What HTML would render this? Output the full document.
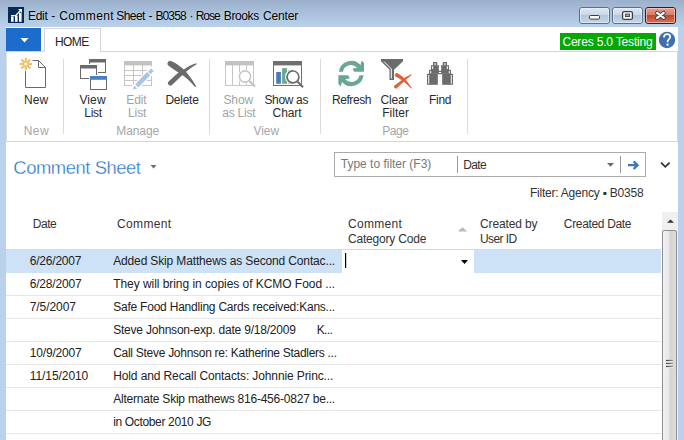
<!DOCTYPE html>
<html><head><meta charset="utf-8">
<style>
*{margin:0;padding:0;box-sizing:border-box}
html,body{width:684px;height:440px;overflow:hidden}
body{position:relative;background:#b9d1ea;font-family:"Liberation Sans",sans-serif;font-size:11.5px;color:#1e1e1e}
.a{position:absolute}
.t{position:absolute;white-space:pre}
svg{position:absolute;overflow:visible}
#title{left:0;top:0;width:684px;height:27px;background:linear-gradient(#9cb0cb,#b9d1eb)}
#client{left:6px;top:27px;width:672px;height:413px;background:#fff}
#appbtn{left:6px;top:28px;width:35px;height:23px;background:#1c6ccb}
#ribbon{left:6px;top:51px;width:672px;height:91px;border:1px solid #d6d6d6;border-left-color:#dedede;background:#fff}
#tab{left:44px;top:28px;width:57px;height:24px;background:#fff;border:1px solid #d4d4d4;border-bottom:none}
.sep{position:absolute;width:1px;background:#dcdcdc}
#badge{left:560px;top:33px;width:96px;height:17px;background:#06a806}
#filter{left:334px;top:152px;width:312px;height:25px;border:1px solid #ababab;background:#fff}
#sel{left:6px;top:250px;width:655px;height:23px;background:#cde1f7}
#edit{left:342px;top:250px;width:132px;height:23px;background:#fff}
.rl{position:absolute;left:6px;width:655px;height:1px;background:#e6e6e6}
#hl{left:6px;top:249px;width:655px;height:1px;background:#dcd8d8}
#sb{left:662px;top:212px;width:16px;height:228px;background:#f0f0f0}
#thumb{left:662px;top:230px;width:15px;height:220px;border:1px solid #8e8e8e;border-radius:2px;background:linear-gradient(90deg,#f2f2f2,#e8e8e8 45%,#d4d4d4 55%,#dcdcdc)}
</style></head><body>
<div id="title" class="a"></div>
<div id="client" class="a"></div>

<!-- title icon -->
<svg style="left:0;top:0" width="684" height="30" viewBox="0 0 684 30">
  <rect x="8" y="7" width="16" height="16" fill="#062a5a"/>
  <rect x="11" y="16.5" width="2.6" height="5.3" fill="#fff"/>
  <rect x="15" y="15.5" width="2.6" height="6.3" fill="#fff"/>
  <rect x="19" y="12.8" width="2.6" height="9" fill="#fff"/>
  <polyline points="11,15.7 15.5,15.7 21,10" fill="none" stroke="#fff" stroke-width="1.3"/>
  <polygon points="18,9 22,9 22,13" fill="#fff"/>
  <!-- window buttons -->
  <defs>
    <linearGradient id="wb" x1="0" y1="0" x2="0" y2="1">
      <stop offset="0" stop-color="#dfe8f3"/><stop offset="0.5" stop-color="#c9d7e8"/><stop offset="0.5" stop-color="#b3c6dd"/><stop offset="1" stop-color="#c6d6ea"/>
    </linearGradient>
    <linearGradient id="cb" x1="0" y1="0" x2="0" y2="1">
      <stop offset="0" stop-color="#e8a18f"/><stop offset="0.5" stop-color="#d47a63"/><stop offset="0.5" stop-color="#c2482b"/><stop offset="1" stop-color="#d4775c"/>
    </linearGradient>
  </defs>
  <rect x="579.5" y="7.5" width="30" height="16" rx="2.5" fill="url(#wb)" stroke="#5d6f88"/><rect x="580.5" y="8.5" width="28" height="14" rx="1.5" fill="none" stroke="#eef3fa" stroke-opacity="0.6"/>
  <rect x="612.5" y="7.5" width="30" height="16" rx="2.5" fill="url(#wb)" stroke="#5d6f88"/><rect x="613.5" y="8.5" width="28" height="14" rx="1.5" fill="none" stroke="#eef3fa" stroke-opacity="0.6"/>
  <rect x="645.5" y="7.5" width="30" height="16" rx="2.5" fill="url(#cb)" stroke="#4a1612"/><rect x="646.5" y="8.5" width="28" height="14" rx="1.5" fill="none" stroke="#f6d0c4" stroke-opacity="0.7"/>
  <rect x="589.5" y="15.5" width="10" height="3.6" rx="1" fill="#fff" stroke="#3d3d3d" stroke-width="1"/>
  <rect x="622.6" y="11.6" width="9.8" height="7.8" rx="1.5" fill="#fff" stroke="#3d3d3d" stroke-width="1.3"/>
  <rect x="625.4" y="14.1" width="4.2" height="2.4" fill="#9bb0c6" stroke="#3d3d3d" stroke-width="0.9"/>
  <path d="M657.1,12.9 L663.7,17.9 M663.7,12.9 L657.1,17.9" stroke="#3a4249" stroke-width="4" stroke-linecap="round"/>
  <path d="M657.1,12.9 L663.7,17.9 M663.7,12.9 L657.1,17.9" stroke="#fff" stroke-width="2.3" stroke-linecap="round"/>
</svg>

<div id="appbtn" class="a"></div>
<svg style="left:0;top:0" width="60" height="60" viewBox="0 0 60 60"><polygon points="20.5,38 28.5,38 24.5,42.5" fill="#fff"/></svg>
<div id="badge" class="a"></div>
<svg style="left:0;top:0" width="684" height="60" viewBox="0 0 684 60">
  <circle cx="667" cy="40" r="8.2" fill="#3f6fae"/>
  <path d="M664,37.4 C664,35.3 665.4,34.2 667.1,34.2 C668.9,34.2 670.2,35.3 670.2,37 C670.2,38.9 667.6,39.4 667.6,41.6 L667.6,42.2" fill="none" stroke="#fff" stroke-width="1.7"/>
  <rect x="666.6" y="43.6" width="2" height="2" fill="#fff"/>
</svg>

<div id="ribbon" class="a"></div>
<div id="tab" class="a"></div>
<div class="sep" style="left:63px;top:59px;height:75px"></div>
<div class="sep" style="left:209px;top:59px;height:75px"></div>
<div class="sep" style="left:320px;top:59px;height:75px"></div>
<div class="sep" style="left:467px;top:59px;height:75px"></div>

<svg style="left:0;top:0" width="684" height="142" viewBox="0 0 684 142">
  <!-- New -->
  <path d="M25.5,71 L25.5,87.5 L45.5,87.5 L45.5,67.5 L38.5,60.5 L32.5,60.5" fill="none" stroke="#6a6a6a" stroke-width="1"/>
  <path d="M38.5,60.5 L38.5,67.5 L45.5,67.5" fill="none" stroke="#6a6a6a" stroke-width="1"/>
  <g stroke="#efbf66" stroke-width="2.1" stroke-linecap="butt">
    <line x1="25.8" y1="57.8" x2="25.8" y2="60.8"/><line x1="25.8" y1="67.2" x2="25.8" y2="70.2"/>
    <line x1="19.6" y1="64" x2="22.6" y2="64"/><line x1="29" y1="64" x2="32" y2="64"/>
    <line x1="21.4" y1="59.6" x2="23.5" y2="61.7"/><line x1="28.1" y1="66.3" x2="30.2" y2="68.4"/>
    <line x1="30.2" y1="59.6" x2="28.1" y2="61.7"/><line x1="23.5" y1="66.3" x2="21.4" y2="68.4"/>
  </g>
  <circle cx="25.8" cy="64" r="2.5" fill="none" stroke="#efbf66" stroke-width="1.8"/>

  <!-- View List -->
  <rect x="89.5" y="59.5" width="16" height="13" fill="#fff" stroke="#6a6a6a"/>
  <rect x="89" y="59" width="17" height="3.5" fill="#6a6a6a"/>
  <rect x="79" y="64" width="19" height="16" fill="#fff"/>
  <rect x="80.5" y="65.5" width="16" height="13" fill="#fff" stroke="#6a6a6a"/>
  <rect x="80" y="65" width="17" height="3.5" fill="#6a6a6a"/>
  <rect x="89" y="75" width="19" height="16" fill="#fff"/>
  <rect x="90.5" y="76.5" width="16" height="13" fill="#fff" stroke="#6a6a6a"/>
  <rect x="90" y="76" width="17" height="3.8" fill="#4a80c3"/>

  <!-- Edit List (disabled) -->
  <g fill="none" stroke="#c6c6c6" stroke-width="1">
    <rect x="124.5" y="61.5" width="27" height="24"/>
    <line x1="133.5" y1="65" x2="133.5" y2="85"/><line x1="142.5" y1="65" x2="142.5" y2="85"/>
    <line x1="124" y1="70.5" x2="152" y2="70.5"/><line x1="124" y1="75.5" x2="152" y2="75.5"/><line x1="124" y1="80.5" x2="152" y2="80.5"/>
  </g>
  <rect x="124" y="61" width="28" height="4.4" fill="#c2c2c2"/>
  <path d="M133,89.6 L152.4,69.8" stroke="#fff" stroke-width="7" stroke-linecap="round"/>
  <polygon points="133,89.6 134.05,85.45 137.15,88.55" fill="#a9c4e4"/>
  <polygon points="135.15,84.35 138.25,87.45 150.15,75.15 147.05,72.05" fill="#a9c4e4"/>
  <polygon points="148.03,71.63 150.57,74.17 153.67,71.07 151.13,68.53" fill="#a9c4e4"/>

  <!-- Delete -->
  <path d="M171.5,61.2 C176,63 180,66 183.5,69.2 C188,73.5 192.5,79.5 196.2,86.5 L195,87 C190.5,81.5 185,76.5 179.5,73.2 C175.5,70.5 171,68 169,66 A2.7,2.7 0 0 1 171.5,61.2 Z" fill="#6b6b6b"/>
  <path d="M196.3,63.2 C192,64.5 188.5,66.3 185,68.7 C182,71 180,72.2 178,73 C174,76.5 170.5,79.5 167.8,82.6 A2.6,2.6 0 0 0 172,85 C175.5,81.5 179,78 182.2,75.2 C186,71.8 190.5,67.8 196.6,64.3 Z" fill="#6b6b6b"/>

  <!-- Show as List (disabled) -->
  <g fill="none" stroke="#c6c6c6" stroke-width="1">
    <rect x="225.5" y="61.5" width="28" height="24"/>
    <line x1="232.5" y1="65" x2="232.5" y2="85"/><line x1="239.5" y1="65" x2="239.5" y2="85"/><line x1="246.5" y1="65" x2="246.5" y2="85"/>
  </g>
  <rect x="225" y="61" width="29" height="4.4" fill="#c2c2c2"/>
  <circle cx="245" cy="76.5" r="7.2" fill="#fff"/>
  <circle cx="245" cy="76.5" r="5.6" fill="#fff" stroke="#c6c6c6" stroke-width="1.6"/>
  <path d="M249.5,81 L255,86.5" stroke="#c6c6c6" stroke-width="2.2"/>

  <!-- Show as Chart -->
  <rect x="273.5" y="61.5" width="28" height="24" fill="none" stroke="#6f6f6f"/>
  <rect x="273" y="61" width="29" height="4.4" fill="#6f6f6f"/>
  <rect x="276.2" y="72" width="4.7" height="11.8" fill="#4a7cb8"/>
  <rect x="282.1" y="68.1" width="4.9" height="15.7" fill="#6aa88f"/>
  <rect x="288" y="70" width="5" height="13.8" fill="#6f6f6f"/>
  <circle cx="293" cy="76.9" r="7.4" fill="none" stroke="#fff" stroke-width="1.2"/>
  <circle cx="293" cy="76.9" r="5.9" fill="#fff" stroke="#6f6f6f" stroke-width="1.7"/>
  <path d="M297.4,81.4 L303,87.2" stroke="#6f6f6f" stroke-width="2.2"/>

  <!-- Refresh -->
  <path d="M338.8,71.7 A12.5,12.5 0 0 1 360.5,65 L361.6,60.5 L364,63 L364,71.7 L354.3,71.7 L352.4,68.8 L357.2,67.8 A8.3,8.3 0 0 0 342.9,71.7 Z" fill="#69a791"/>
  <path d="M363.6,75.3 A12.5,12.5 0 0 1 341.9,82 L340.8,86.5 L338.4,84 L338.4,75.3 L348.1,75.3 L350,78.2 L345.2,79.2 A8.3,8.3 0 0 0 359.5,75.3 Z" fill="#69a791"/>

  <!-- Clear Filter -->
  <polygon points="381,59 403,59 403,61.2 394,69.8 394,80 389.5,80 389.5,69.8 381,61.2" fill="#6b6b6b"/>
  <polyline points="384,61.6 391.3,68.9 391.3,78.6" fill="none" stroke="#fff" stroke-width="1"/>
  <path d="M398.2,73.6 Q402,76 405.5,79.2 L411.9,88 L411.2,88.5 L403.6,81.6 Q399,78 395.4,76.6 A1.9,1.9 0 0 1 398.2,73.6 Z" fill="#e0623c"/>
  <path d="M411.5,74.2 Q406.5,76.2 402.8,79.2 Q398.5,82.5 394.2,85.8 A1.9,1.9 0 0 0 396.8,88.3 Q400.5,84.6 404.7,81 Q408,77.8 411.8,74.9 Z" fill="#e0623c"/>

  <!-- Find -->
  <g fill="#6b6b6b">
    <rect x="433" y="62" width="4.2" height="3.5"/>
    <rect x="431" y="65.2" width="7.8" height="4.8"/>
    <rect x="429" y="69.9" width="9.8" height="4"/>
    <rect x="427" y="73.8" width="10.8" height="11"/>
    <rect x="437" y="70.7" width="6" height="3.5"/>
    <rect x="442.8" y="62" width="4.2" height="3.5"/>
    <rect x="441.2" y="65.2" width="7.8" height="4.8"/>
    <rect x="441.2" y="69.9" width="9.8" height="4"/>
    <rect x="442.2" y="73.8" width="10.8" height="11"/>
  </g>
  <g fill="#fff">
    <rect x="428.2" y="75" width="1" height="8.8"/>
    <rect x="430.2" y="71" width="1" height="2.2"/>
    <rect x="432.2" y="66.2" width="1" height="2.8"/>
    <rect x="434.6" y="63" width="1" height="2"/>
    <rect x="438.8" y="72" width="2.4" height="1"/>
    <rect x="444.4" y="63" width="1" height="2"/>
    <rect x="446.8" y="66.2" width="1" height="2.8"/>
    <rect x="448.8" y="71" width="1" height="2.2"/>
    <rect x="450.8" y="75" width="1" height="8.8"/>
  </g>
</svg>

<!-- page header -->
<svg style="left:0;top:0" width="684" height="180" viewBox="0 0 684 180">
  <polygon points="150.5,165 156.5,165 153.5,168.5" fill="#6d6d6d"/>
</svg>
<div id="filter" class="a"></div>
<div class="sep" style="left:457px;top:156px;height:17px;background:#999"></div>
<div class="sep" style="left:620px;top:156px;height:17px;background:#999"></div>
<svg style="left:0;top:0" width="684" height="180" viewBox="0 0 684 180">
  <polygon points="607,163 614,163 610.5,166.8" fill="#6b6b6b"/>
  <path d="M628,165.2 L637.5,165.2 M633.6,161.4 L637.6,165.2 L633.6,169" fill="none" stroke="#3c76bd" stroke-width="2.3"/>
  <path d="M661,162.7 L665.3,166.8 L669.6,162.7" fill="none" stroke="#333" stroke-width="1.8"/>
</svg>

<!-- grid -->
<div id="hl" class="a"></div>
<div id="sel" class="a"></div>
<div id="edit" class="a"></div>
<div class="rl" style="top:295px"></div>
<div class="rl" style="top:318px"></div>
<div class="rl" style="top:341px"></div>
<div class="rl" style="top:364px"></div>
<div class="rl" style="top:387px"></div>
<div class="rl" style="top:410px"></div>
<div class="rl" style="top:433px"></div>
<svg style="left:0;top:0" width="684" height="440" viewBox="0 0 684 440">
  <polygon points="457.8,231.6 467.2,231.6 462.5,227.2" fill="#b8b8b8"/>
  <rect x="345" y="253" width="1.2" height="15" fill="#000"/>
  <polygon points="461,260 468,260 464.5,264" fill="#000"/>
</svg>
<div id="sb" class="a"></div>
<svg style="left:0;top:0" width="684" height="440" viewBox="0 0 684 440">
  <polygon points="667,222.7 674,222.7 670.5,219.5" fill="#333"/>
</svg>
<div id="thumb" class="a"></div>
<svg style="left:0;top:0" width="684" height="440" viewBox="0 0 684 440">
  <defs><linearGradient id="gr" x1="666" y1="0" x2="673" y2="0" gradientUnits="userSpaceOnUse"><stop offset="0" stop-color="#3a3a3a"/><stop offset="1" stop-color="#9a9a9a"/></linearGradient></defs>
  <g stroke="#fff" stroke-width="1" stroke-opacity="0.9">
    <line x1="666" y1="361.6" x2="673" y2="361.6"/>
    <line x1="666" y1="364.6" x2="673" y2="364.6"/>
    <line x1="666" y1="367.6" x2="673" y2="367.6"/>
  </g>
  <g stroke="url(#gr)" stroke-width="1.3">
    <line x1="666" y1="360.5" x2="673" y2="360.5"/>
    <line x1="666" y1="363.5" x2="673" y2="363.5"/>
    <line x1="666" y1="366.5" x2="673" y2="366.5"/>
  </g>
</svg>

<div class="t" style="left:27.90px;top:9.84px;font-size:12px;line-height:12px;color:#000;letter-spacing:-0.229px;text-shadow:0 0 3px rgba(215,230,248,.9)">Edit</div>
<div class="t" style="left:51.30px;top:9.84px;font-size:12px;line-height:12px;color:#000;text-shadow:0 0 3px rgba(215,230,248,.9)">-</div>
<div class="t" style="left:59.20px;top:9.84px;font-size:12px;line-height:12px;color:#000;letter-spacing:0.414px;text-shadow:0 0 3px rgba(215,230,248,.9)">Comment</div>
<div class="t" style="left:116.30px;top:9.84px;font-size:12px;line-height:12px;color:#000;letter-spacing:-0.565px;text-shadow:0 0 3px rgba(215,230,248,.9)">Sheet</div>
<div class="t" style="left:148.50px;top:9.84px;font-size:12px;line-height:12px;color:#000;text-shadow:0 0 3px rgba(215,230,248,.9)">-</div>
<div class="t" style="left:155.40px;top:9.84px;font-size:12px;line-height:12px;color:#000;letter-spacing:-0.851px;text-shadow:0 0 3px rgba(215,230,248,.9)">B0358</div>
<div class="t" style="left:189.60px;top:9.84px;font-size:12px;line-height:12px;color:#000;text-shadow:0 0 3px rgba(215,230,248,.9)">·</div>
<div class="t" style="left:195.70px;top:9.84px;font-size:12px;line-height:12px;color:#000;letter-spacing:-1.039px;text-shadow:0 0 3px rgba(215,230,248,.9)">Rose</div>
<div class="t" style="left:223.80px;top:9.84px;font-size:12px;line-height:12px;color:#000;letter-spacing:-0.392px;text-shadow:0 0 3px rgba(215,230,248,.9)">Brooks</div>
<div class="t" style="left:262.90px;top:9.84px;font-size:12px;line-height:12px;color:#000;letter-spacing:-0.146px;text-shadow:0 0 3px rgba(215,230,248,.9)">Center</div>
<div class="t" style="left:54.90px;top:35.84px;font-size:12px;line-height:12px;color:#262626;letter-spacing:-0.533px">HOME</div>
<div class="t" style="left:562.40px;top:35.84px;font-size:12px;line-height:12px;color:#fff;letter-spacing:-0.179px">Ceres 5.0 Testing</div>
<div class="t" style="left:24.10px;top:93.84px;font-size:12px;line-height:12px;color:#2b2b2b;letter-spacing:0.092px">New</div>
<div class="t" style="left:79.40px;top:93.84px;font-size:12px;line-height:12px;color:#2b2b2b;letter-spacing:0.134px">View</div>
<div class="t" style="left:84.20px;top:106.84px;font-size:12px;line-height:12px;color:#2b2b2b;letter-spacing:-0.229px">List</div>
<div class="t" style="left:126.20px;top:93.84px;font-size:12px;line-height:12px;color:#a3a3a3;letter-spacing:-0.062px">Edit</div>
<div class="t" style="left:128.00px;top:106.84px;font-size:12px;line-height:12px;color:#a3a3a3;letter-spacing:-0.096px">List</div>
<div class="t" style="left:165.40px;top:93.84px;font-size:12px;line-height:12px;color:#2b2b2b;letter-spacing:-0.237px">Delete</div>
<div class="t" style="left:223.40px;top:93.84px;font-size:12px;line-height:12px;color:#a3a3a3;letter-spacing:-0.077px">Show</div>
<div class="t" style="left:222.30px;top:106.84px;font-size:12px;line-height:12px;color:#a3a3a3;letter-spacing:-0.231px">as List</div>
<div class="t" style="left:264.40px;top:93.84px;font-size:12px;line-height:12px;color:#2b2b2b;letter-spacing:-0.339px">Show as</div>
<div class="t" style="left:272.60px;top:106.84px;font-size:12px;line-height:12px;color:#2b2b2b;letter-spacing:-0.086px">Chart</div>
<div class="t" style="left:331.90px;top:93.84px;font-size:12px;line-height:12px;color:#2b2b2b;letter-spacing:-0.405px">Refresh</div>
<div class="t" style="left:380.60px;top:93.84px;font-size:12px;line-height:12px;color:#2b2b2b;letter-spacing:-0.197px">Clear</div>
<div class="t" style="left:382.20px;top:106.84px;font-size:12px;line-height:12px;color:#2b2b2b;letter-spacing:0.026px">Filter</div>
<div class="t" style="left:429.00px;top:93.84px;font-size:12px;line-height:12px;color:#2b2b2b;letter-spacing:-0.281px">Find</div>
<div class="t" style="left:23.80px;top:124.84px;font-size:12px;line-height:12px;color:#a6a6a6;letter-spacing:0.392px">New</div>
<div class="t" style="left:116.20px;top:124.84px;font-size:12px;line-height:12px;color:#a6a6a6;letter-spacing:-0.055px">Manage</div>
<div class="t" style="left:253.60px;top:124.84px;font-size:12px;line-height:12px;color:#a6a6a6;letter-spacing:-0.099px">View</div>
<div class="t" style="left:382.20px;top:124.84px;font-size:12px;line-height:12px;color:#a6a6a6;letter-spacing:-0.410px">Page</div>
<div class="t" style="left:13.30px;top:159.02px;font-size:18.4px;line-height:18.4px;color:#1f6fc4;letter-spacing:-0.433px;-webkit-text-stroke:0.35px #fff">Comment Sheet</div>
<div class="t" style="left:340.80px;top:157.84px;font-size:12px;line-height:12px;color:#787878;letter-spacing:-0.011px">Type to filter (F3)</div>
<div class="t" style="left:463.20px;top:158.84px;font-size:12px;line-height:12px;color:#333;letter-spacing:-0.653px">Date</div>
<div class="t" style="left:529.90px;top:186.84px;font-size:12px;line-height:12px;color:#333;letter-spacing:-0.220px">Filter: Agency ▪ B0358</div>
<div class="t" style="left:32.80px;top:217.84px;font-size:12px;line-height:12px;color:#333;letter-spacing:-0.486px">Date</div>
<div class="t" style="left:117.00px;top:217.84px;font-size:12px;line-height:12px;color:#333;letter-spacing:0.364px">Comment</div>
<div class="t" style="left:348.00px;top:217.84px;font-size:12px;line-height:12px;color:#333;letter-spacing:0.297px">Comment</div>
<div class="t" style="left:348.00px;top:232.84px;font-size:12px;line-height:12px;color:#333;letter-spacing:-0.193px">Category Code</div>
<div class="t" style="left:480.00px;top:217.84px;font-size:12px;line-height:12px;color:#333;letter-spacing:-0.123px">Created by</div>
<div class="t" style="left:480.00px;top:232.84px;font-size:12px;line-height:12px;color:#333;letter-spacing:-0.595px">User ID</div>
<div class="t" style="left:563.80px;top:217.84px;font-size:12px;line-height:12px;color:#333;letter-spacing:-0.334px">Created Date</div>
<div class="t" style="left:29.70px;top:254.84px;font-size:12px;line-height:12px;color:#222;letter-spacing:-0.199px">6/26/2007</div>
<div class="t" style="left:113.20px;top:254.84px;font-size:12px;line-height:12px;color:#222;letter-spacing:-0.144px">Added Skip Matthews as Second Contac...</div>
<div class="t" style="left:29.70px;top:277.84px;font-size:12px;line-height:12px;color:#222;letter-spacing:-0.174px">6/28/2007</div>
<div class="t" style="left:113.20px;top:277.84px;font-size:12px;line-height:12px;color:#222;letter-spacing:-0.051px">They will bring in copies of KCMO Food ...</div>
<div class="t" style="left:29.70px;top:300.84px;font-size:12px;line-height:12px;color:#222;letter-spacing:-0.060px">7/5/2007</div>
<div class="t" style="left:113.20px;top:300.84px;font-size:12px;line-height:12px;color:#222;letter-spacing:-0.220px">Safe Food Handling Cards received:Kans...</div>
<div class="t" style="left:113.20px;top:323.84px;font-size:12px;line-height:12px;color:#222;letter-spacing:-0.212px">Steve Johnson-exp. date 9/18/2009</div>
<div class="t" style="left:29.70px;top:346.84px;font-size:12px;line-height:12px;color:#222;letter-spacing:-0.161px">10/9/2007</div>
<div class="t" style="left:113.20px;top:346.84px;font-size:12px;line-height:12px;color:#222;letter-spacing:-0.280px">Call Steve Johnson re: Katherine Stadlers ...</div>
<div class="t" style="left:29.70px;top:369.84px;font-size:12px;line-height:12px;color:#222;letter-spacing:-0.064px">11/15/2010</div>
<div class="t" style="left:113.20px;top:369.84px;font-size:12px;line-height:12px;color:#222;letter-spacing:-0.112px">Hold and Recall Contacts: Johnnie Princ...</div>
<div class="t" style="left:113.20px;top:392.84px;font-size:12px;line-height:12px;color:#222;letter-spacing:-0.220px">Alternate Skip mathews 816-456-0827 be...</div>
<div class="t" style="left:113.20px;top:415.84px;font-size:12px;line-height:12px;color:#222;letter-spacing:-0.345px">in October 2010 JG</div>
<div class="t" style="left:316.70px;top:323.84px;font-size:12px;line-height:12px;color:#222;letter-spacing:-0.639px">K...</div>
</body></html>
